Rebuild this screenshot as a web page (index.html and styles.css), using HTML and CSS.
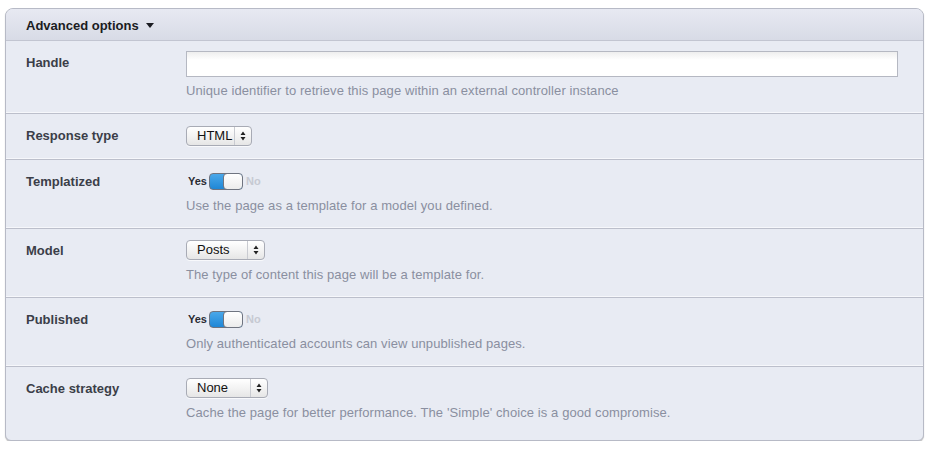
FILE: index.html
```html
<!DOCTYPE html>
<html>
<head>
<meta charset="utf-8">
<link rel="stylesheet" href="styles.css">
</head>
<body>
<div class="panel">
  <div class="panel-head">Advanced options <span class="caret"></span></div>
  <div class="row row-handle">
    <div class="label">Handle</div>
    <div class="field">
      <div class="ctrl"><input class="text" type="text"></div>
      <div class="help">Unique identifier to retrieve this page within an external controller instance</div>
    </div>
  </div>
  <div class="row row-plain">
    <div class="label">Response type</div>
    <div class="field">
      <div class="ctrl"><span class="select w-html"><span class="sel-text">HTML</span><span class="sel-arrows"><svg width="6" height="10" viewBox="0 0 6 10"><path d="M3 0.5 L5.5 4 H0.5 Z M3 9.5 L5.5 6 H0.5 Z" fill="#222"/></svg></span></span></div>
    </div>
  </div>
  <div class="row">
    <div class="label">Templatized</div>
    <div class="field">
      <div class="ctrl"><span class="toggle"><span class="yes">Yes</span><span class="track"><span class="knob"></span></span><span class="no">No</span></span></div>
      <div class="help">Use the page as a template for a model you defined.</div>
    </div>
  </div>
  <div class="row">
    <div class="label">Model</div>
    <div class="field">
      <div class="ctrl"><span class="select w-posts"><span class="sel-text">Posts</span><span class="sel-arrows"><svg width="6" height="10" viewBox="0 0 6 10"><path d="M3 0.5 L5.5 4 H0.5 Z M3 9.5 L5.5 6 H0.5 Z" fill="#222"/></svg></span></span></div>
      <div class="help">The type of content this page will be a template for.</div>
    </div>
  </div>
  <div class="row">
    <div class="label">Published</div>
    <div class="field">
      <div class="ctrl"><span class="toggle"><span class="yes">Yes</span><span class="track"><span class="knob"></span></span><span class="no">No</span></span></div>
      <div class="help">Only authenticated accounts can view unpublished pages.</div>
    </div>
  </div>
  <div class="row last">
    <div class="label">Cache strategy</div>
    <div class="field">
      <div class="ctrl"><span class="select w-none"><span class="sel-text">None</span><span class="sel-arrows"><svg width="6" height="10" viewBox="0 0 6 10"><path d="M3 0.5 L5.5 4 H0.5 Z M3 9.5 L5.5 6 H0.5 Z" fill="#222"/></svg></span></span></div>
      <div class="help">Cache the page for better performance. The 'Simple' choice is a good compromise.</div>
    </div>
  </div>
</div>
</body>
</html>
```
FILE: styles.css
```css
html, body {
  margin: 0;
  padding: 0;
  background: #ffffff;
}
body {
  font-family: "Liberation Sans", Arial, sans-serif;
  font-size: 13px;
  color: #3b3e48;
}
.panel {
  margin: 8px 8px 0 5px;
  border: 1px solid #b7bac6;
  border-radius: 8px 8px 6px 6px;
  background: #e8ebf3;
  box-shadow: 0 1px 1px rgba(0, 0, 0, 0.25);
  overflow: hidden;
}
.panel-head {
  box-sizing: border-box;
  height: 32px;
  padding: 1px 0 0 20px;
  font-weight: bold;
  font-size: 13px;
  color: #1b1c22;
  background: linear-gradient(#e7e9f2, #d8dbe6);
  border-bottom: 1px solid #c2c5d1;
  display: flex;
  align-items: center;
  gap: 7px;
}
.caret {
  width: 0;
  height: 0;
  border-left: 4px solid transparent;
  border-right: 4px solid transparent;
  border-top: 5px solid #1b1c22;
  margin-top: 1px;
}
.row {
  display: flex;
  padding: 11px 25px 14px 20px;
  border-bottom: 1px solid #bcbfcb;
  box-shadow: inset 0 -1px 0 #f6f7fb;
}
.row-handle {
  padding-top: 10px;
}
.row-plain {
  padding-top: 12px;
  padding-bottom: 13px;
}
.row.last {
  border-bottom: 0;
  box-shadow: none;
  padding-bottom: 19px;
}
.label {
  width: 160px;
  flex: none;
  font-weight: bold;
  line-height: 20px;
  padding-top: 1px;
  color: #3b3e48;
}
.row-plain .label {
  padding-top: 0;
}
.row-handle .label {
  line-height: 22px;
}
.field {
  flex: 1;
  min-width: 0;
}
.ctrl {
  min-height: 20px;
  display: flex;
  align-items: center;
}
.help {
  margin-top: 7px;
  line-height: 16px;
  color: #8a8fa0;
  letter-spacing: 0.09px;
}
.row-handle .help {
  margin-top: 6px;
}
.text {
  display: block;
  box-sizing: border-box;
  width: 100%;
  height: 26px;
  margin: 0;
  border: 1px solid #b5b8c2;
  background: linear-gradient(#eeeeee, #ffffff 8px);
  font: inherit;
  outline: none;
}
.select {
  box-sizing: border-box;
  height: 20px;
  display: inline-flex;
  align-items: stretch;
  border: 1px solid #a8abb5;
  border-radius: 4px;
  background: linear-gradient(#ffffff, #f3f3f3 50%, #e6e6e6);
  box-shadow: 0 1px 0 rgba(255, 255, 255, 0.7);
  color: #111;
  font-size: 13px;
}
.sel-text {
  flex: 1;
  line-height: 18px;
  padding-left: 10px;
}
.sel-arrows {
  width: 16px;
  border-left: 1px solid #c9cbd1;
  display: flex;
  align-items: center;
  justify-content: center;
}
.w-html { width: 66px; }
.w-posts { width: 79px; }
.w-none { width: 82px; }
.toggle {
  display: inline-flex;
  align-items: center;
  font-size: 11px;
  font-weight: bold;
}
.yes {
  color: #2a2c33;
  margin-left: 2px;
  margin-right: 2px;
}
.no {
  color: #c6c9d2;
  margin-left: 3px;
}
.track {
  position: relative;
  box-sizing: border-box;
  width: 34px;
  height: 17px;
  border: 1px solid #6f7480;
  border-radius: 4px;
  background: linear-gradient(#4aa8ea, #1f87d6);
  overflow: hidden;
}
.knob {
  position: absolute;
  right: -1px;
  top: -1px;
  box-sizing: border-box;
  width: 20px;
  height: 17px;
  border: 1px solid #6f7480;
  border-radius: 4px;
  background: linear-gradient(#ffffff, #ececec);
}
```
